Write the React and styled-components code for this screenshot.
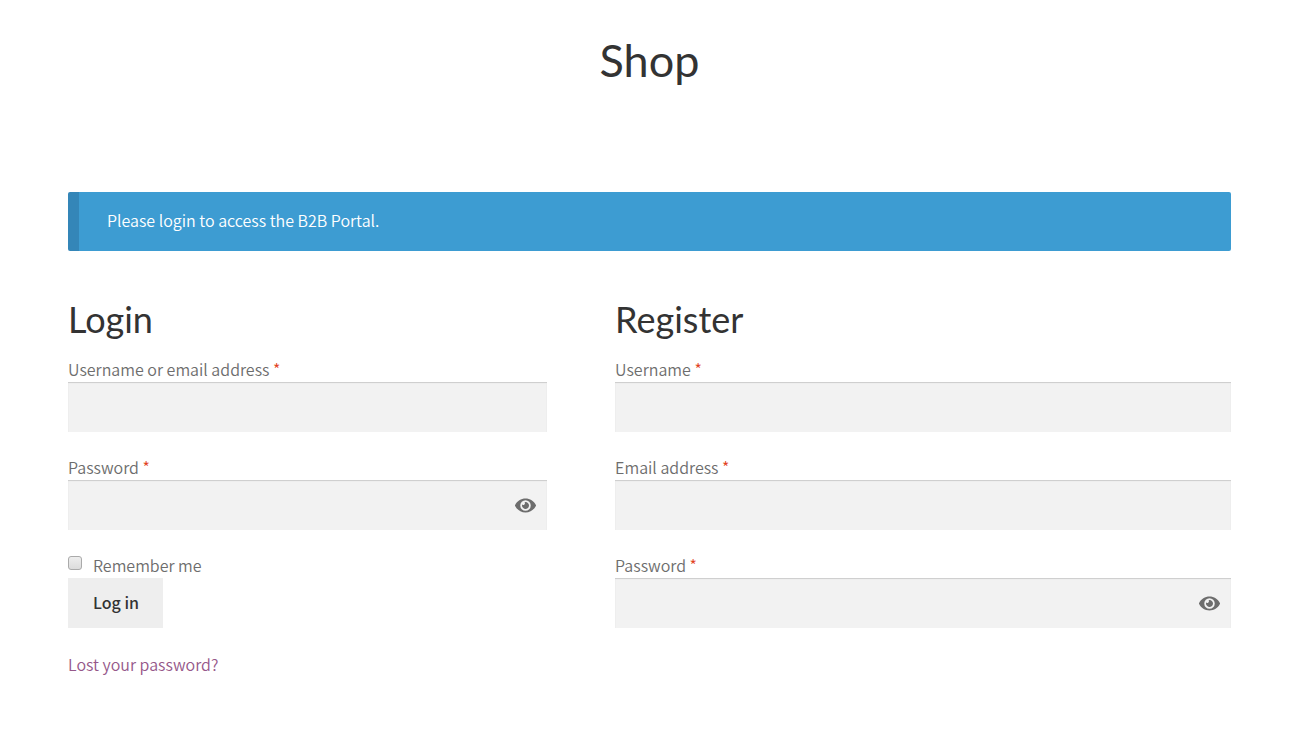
import React from 'react';
import styled, { createGlobalStyle } from 'styled-components';

const GlobalStyle = createGlobalStyle`
  *, *::before, *::after { box-sizing: border-box; }
  body {
    margin: 0;
    background: #fff;
    color: #6d6d6d;
    font-family: "Noto Sans CJK JP", "Noto Sans", sans-serif;
    font-size: 16px;
    font-weight: 350;
    line-height: 24px;
  }
`;

const Page = styled.main`
  padding: 30px 74px 48px 68px;
`;

const Title = styled.h1`
  margin: 0 0 102px;
  color: #333;
  font-family: Lato, sans-serif;
  font-size: 45px;
  font-weight: 400;
  line-height: 60px;
  text-align: center;
`;

const Notice = styled.div`
  margin-bottom: 47px;
  padding: 16px 28px 19px;
  border-left: 11px solid #3486b8;
  border-radius: 2px;
  background: #3d9cd2;
  color: #fff;
`;

const Columns = styled.div`
  display: grid;
  grid-template-columns: 7fr 9fr;
  gap: 68px;
`;

const Heading = styled.h2`
  margin: 0 0 17px;
  color: #333;
  font-family: Lato, sans-serif;
  font-size: 36px;
  font-weight: 400;
  line-height: 43px;
`;

const FieldRow = styled.div`
  margin-bottom: 24px;
`;

const Label = styled.label`
  display: block;
  padding-bottom: 2px;
  line-height: 22px;
`;

const Required = styled.span`
  color: #e2401c;
`;

const InputBox = styled.div`
  display: flex;
  height: 50px;
  background: #f2f2f2;
  box-shadow: inset 0 1px 1px rgba(0, 0, 0, 0.16);
`;

const Input = styled.input`
  flex: 1;
  min-width: 0;
  padding: 0 12px;
  border: 0;
  background: transparent;
  color: #43454b;
  font: inherit;
`;

const RevealButton = styled.button`
  display: flex;
  align-items: center;
  padding: 0 11px;
  border: 0;
  background: transparent;
  color: #6d6d6d;
  cursor: pointer;
`;

const Remember = styled.label`
  display: flex;
  gap: 11px;
  padding-bottom: 2px;
  line-height: 22px;
`;

const Checkbox = styled.input`
  appearance: none;
  width: 14px;
  height: 14px;
  margin: 2px 0 0;
  border: 1px solid #aaa;
  border-radius: 3px;
  background: linear-gradient(#eee, #dcdcdc);

  &:checked { background: #6d6d6d; }
`;

const SubmitButton = styled.button`
  display: block;
  height: 50px;
  margin-bottom: 24px;
  padding: 0 24px 2px 25px;
  border: 0;
  background: #eee;
  color: #333;
  font: inherit;
  font-weight: 500;
  cursor: pointer;
`;

const Link = styled.a`
  color: #96588a;
  text-decoration: none;
`;

function EyeIcon() {
  return (
    <svg width="21" height="19" viewBox="0 0 576 512" fill="currentColor" aria-hidden="true">
      <path d="M572.52 241.4C518.29 135.59 410.93 64 288 64S57.68 135.64 3.48 241.41a32.35 32.35 0 0 0 0 29.19C57.71 376.41 165.07 448 288 448s230.32-71.64 284.52-177.41a32.35 32.35 0 0 0 0-29.19zM288 400a144 144 0 1 1 144-144 143.93 143.93 0 0 1-144 144zm0-240a95.31 95.31 0 0 0-25.31 3.79 47.85 47.85 0 0 1-66.9 66.9A95.78 95.78 0 1 0 288 160z" />
    </svg>
  );
}

function Field({ id, label, type = 'text' }) {
  return (
    <FieldRow>
      <Label htmlFor={id}>
        {label} <Required>*</Required>
      </Label>
      <InputBox>
        <Input id={id} type={type} required />
        {type === 'password' && (
          <RevealButton type="button" aria-label="Show password">
            <EyeIcon />
          </RevealButton>
        )}
      </InputBox>
    </FieldRow>
  );
}

export default function App() {
  return (
    <>
      <GlobalStyle />
      <Page>
        <Title>Shop</Title>
        <Notice role="status">Please login to access the B2B Portal.</Notice>
        <Columns>
          <section>
            <Heading>Login</Heading>
            <form>
              <Field id="login-username" label="Username or email address" />
              <Field id="login-password" label="Password" type="password" />
              <Remember>
                <Checkbox type="checkbox" />
                Remember me
              </Remember>
              <SubmitButton type="submit">Log in</SubmitButton>
              <Link href="#lost-password">Lost your password?</Link>
            </form>
          </section>
          <section>
            <Heading>Register</Heading>
            <form>
              <Field id="register-username" label="Username" />
              <Field id="register-email" label="Email address" />
              <Field id="register-password" label="Password" type="password" />
            </form>
          </section>
        </Columns>
      </Page>
    </>
  );
}
